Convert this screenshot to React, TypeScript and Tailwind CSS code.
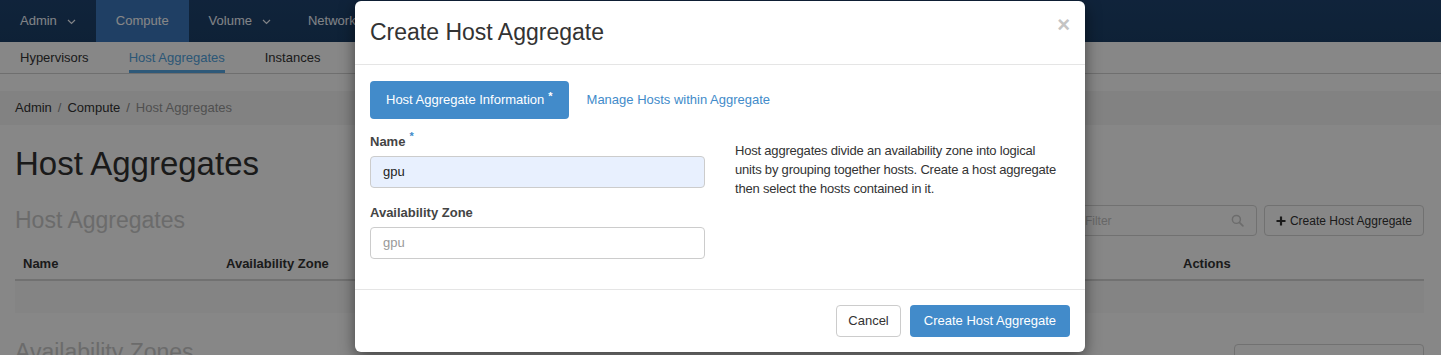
import React from 'react';

const font = { fontFamily: '"Liberation Sans", Arial, sans-serif' };

const Chevron = () => (
  <svg width="9" height="6" viewBox="0 0 9 6" className="ml-2.5 mt-0.5">
    <path d="M1 1l3.5 3.5L8 1" fill="none" stroke="currentColor" strokeWidth="1.2" />
  </svg>
);

const Page = () => {
  return (
    <div className="w-full h-full bg-white text-[#333]">
      {/* Barra superior */}
      <div className="h-[42px] bg-gradient-to-b from-[#1f4370] to-[#1c3f67] flex text-[13px] text-[#f4f8ff]">
        <div className="flex items-center px-5">Admin<Chevron /></div>
        <div className="flex items-center px-5 bg-[#3c77bd] text-white">Compute</div>
        <div className="flex items-center px-5">Volume<Chevron /></div>
        <div className="flex items-center pl-[17px]">Network</div>
      </div>

      {/* Sub navegación */}
      <div className="h-[32px] flex items-stretch gap-10 px-5 border-b border-[#d2d2d2] text-[13px]">
        <div className="flex items-center">Hypervisors</div>
        <div className="flex items-center text-[#52a4e0] border-b-[3px] border-[#58a8e4] pt-[3px]">Host Aggregates</div>
        <div className="flex items-center">Instances</div>
      </div>

      {/* Breadcrumb */}
      <div className="mt-[17px] h-[34px] bg-[#f6f6f6] flex items-center px-[15px] text-[13px]">
        <span>Admin</span>
        <span className="mx-1.5 text-[#8a8a8a]">/</span>
        <span>Compute</span>
        <span className="mx-1.5 text-[#8a8a8a]">/</span>
        <span className="text-[#969696]">Host Aggregates</span>
      </div>

      <div className="pl-[15px] pr-[17px]">
        <h1 className="text-[33px] leading-[40px] mt-[19px] text-[#313131]">Host Aggregates</h1>

        <div className="flex items-center justify-between mt-[21px] h-[31px]">
          <h3 className="text-[23px] text-[#cbcbcb]">Host Aggregates</h3>
          <div className="flex items-center gap-[7px]">
            <div className="w-[198px] h-[31px] border border-[#d5d5d5] rounded-[4px] flex items-center justify-between pl-[25px] pr-3 text-[12px] text-[#c4c4c4]">
              <span>Filter</span>
              <svg width="13" height="13" viewBox="0 0 14 14" className="text-[#cccccc]">
                <circle cx="5.8" cy="5.8" r="4.3" fill="none" stroke="currentColor" strokeWidth="1.6" />
                <path d="M9 9l3.8 3.8" stroke="currentColor" strokeWidth="1.8" strokeLinecap="round" />
              </svg>
            </div>
            <div className="h-[31px] border border-[#d5d5d5] rounded-[4px] flex items-center px-[11px] text-[12px] text-[#333]">
              <svg width="10" height="10" viewBox="0 0 10 10" className="mr-1">
                <path d="M5 0.5v9M0.5 5h9" stroke="currentColor" strokeWidth="2.2" />
              </svg>
              Create Host Aggregate
            </div>
          </div>
        </div>

        {/* Tabla */}
        <div className="mt-[12px] grid grid-cols-[203px_957px_1fr] h-[33px] items-center px-2 border-b-2 border-[#d6d6d6] text-[13px] font-bold">
          <span>Name</span>
          <span>Availability Zone</span>
          <span>Actions</span>
        </div>
        <div className="h-[32px] bg-[#f9f9f9]" />

        <div className="mt-[22px] flex justify-between items-start">
          <h3 className="text-[23px] text-[#cbcbcb]">Availability Zones</h3>
          <span className="mt-[9px] w-[190px] h-[31px] border border-[#d5d5d5] rounded-[4px]" />
        </div>
      </div>
    </div>
  );
};

const Modal = () => {
  return (
    <div className="absolute left-[355px] top-[1px] w-[730px] bg-white rounded-[6px] shadow-[0_5px_15px_rgba(0,0,0,0.5)] text-[#333]">
      <div className="h-[64px] flex items-center justify-between px-[15px] border-b border-[#e5e5e5]">
        <h4 className="text-[23px]">Create Host Aggregate</h4>
        <span className="text-[22px] font-bold text-[#c4c4c4] leading-none -mt-[16px]">×</span>
      </div>

      <div className="px-[15px] pt-[16px] pb-[30px]">
        <div className="flex items-center text-[13px]">
          <div className="h-[38px] px-[16px] bg-[#428bca] rounded-[4px] text-white flex items-center">
            Host Aggregate Information
            <span className="ml-1 -mt-2 text-[11px] font-bold">*</span>
          </div>
          <div className="ml-[18px] text-[#428bca]">Manage Hosts within Aggregate</div>
        </div>

        <div className="grid grid-cols-2 gap-[30px] mt-[13px]">
          <div className="text-[13px]">
            <label className="font-bold text-[#444] flex">
              Name<span className="ml-1 -mt-1 text-[11px] text-[#428bca]">*</span>
            </label>
            <div className="mt-[4px] h-[32px] bg-[#e8f0fe] border border-[#ccc] rounded-[4px] flex items-center px-3 text-[#222]">gpu</div>
            <label className="block font-bold text-[#444] mt-[15px]">Availability Zone</label>
            <div className="mt-[5px] h-[32px] border border-[#ccc] rounded-[4px] flex items-center px-3 text-[#999]">gpu</div>
          </div>
          <p className="text-[13px] leading-[19px] mt-[9px] tracking-[-0.2px] whitespace-nowrap">
            Host aggregates divide an availability zone into logical
            <br />
            units by grouping together hosts. Create a host aggregate
            <br />
            then select the hosts contained in it.
          </p>
        </div>
      </div>

      <div className="h-[63px] border-t border-[#e5e5e5] flex items-center justify-end gap-[9px] px-[15px] text-[13px]">
        <button className="h-[32px] px-[11px] border border-[#ccc] rounded-[4px] bg-white text-[#333]">Cancel</button>
        <button className="h-[32px] px-[14px] rounded-[4px] bg-[#428bca] text-white">Create Host Aggregate</button>
      </div>
    </div>
  );
};

export default function App() {
  return (
    <div className="relative w-[1441px] h-[355px] overflow-hidden" style={font}>
      <Page />
      {/* Fondo oscuro del modal */}
      <div className="absolute inset-0 bg-black/[0.47]" />
      <Modal />
    </div>
  );
}
